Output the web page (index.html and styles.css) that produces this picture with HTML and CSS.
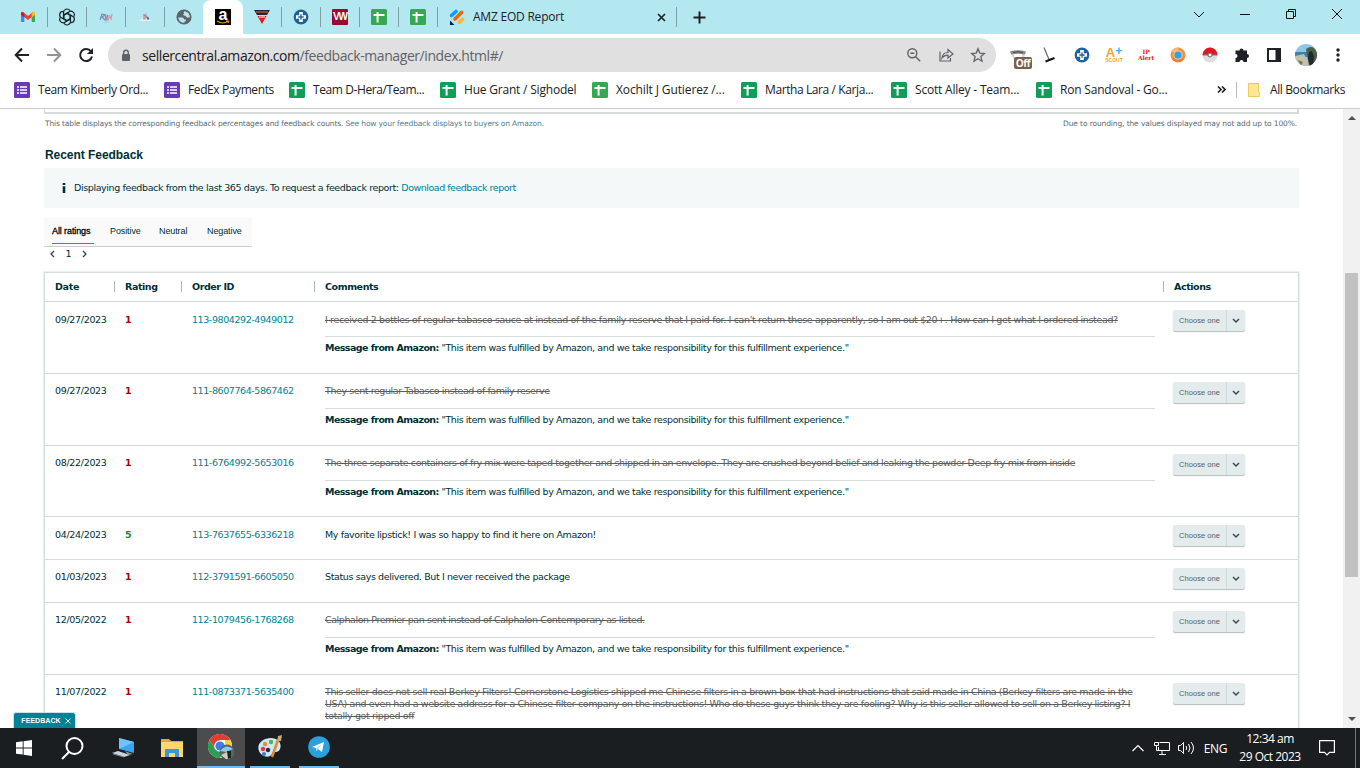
FILE: index.html
```html
<!DOCTYPE html>
<html lang="en">
<head>
  <meta charset="UTF-8">
  <meta name="viewport" content="width=device-width, initial-scale=1.0">
  <title>Feedback Manager</title>
  <link rel="stylesheet" href="styles.css">
</head>
<body>
  <!-- shared icons -->
  <svg class="defs">
    <symbol id="sheet" viewBox="0 0 16 16"><rect width="16" height="16" rx="1.5" fill="currentColor"/><path d="M2.5 5.9h11M6.6 3v10.5" stroke="#fff" stroke-width="2"/></symbol>
    <symbol id="form" viewBox="0 0 16 16"><rect width="16" height="16" rx="1.5" fill="#673ab7"/><path d="M6 5h7M6 8h7M6 11h7M3 5h2M3 8h2M3 11h2" stroke="#fff" stroke-width="1.7"/></symbol>
    <symbol id="cross" viewBox="0 0 16 16"><circle cx="8" cy="8" r="7.4" fill="#1f6396"/><path d="M6.2 3h3.600v3.200H13v3.600H9.800V13H6.200V9.800H3V6.200h3.200z" fill="#fff"/><path d="M8 5.300v5.400M5.300 8h5.400" stroke="#1f6396" stroke-width="1.300"/></symbol>
    <symbol id="down" viewBox="0 0 8 6"><path d="M1 1l3 3 3-3" fill="none" stroke="#3b4b50" stroke-width="1.5"/></symbol>
  </svg>

  <div class="tabstrip">
    <div class="tab"><svg width="16" height="16" viewBox="0 0 16 16"><path d="M1 4v9h3.300V7z" fill="#4285f4"/><path d="M15 4v9h-3.300V7z" fill="#34a853"/><path d="M1 3.500L3 3l5 4 5-4v4l-5 4-5-4z" fill="#ea4335"/><path d="M11.700 4L14 2.800l1 1V6l-3.300 2.500z" fill="#fbbc04"/><path d="M4.300 4L2 2.800l-1 1V6l3.300 2.500z" fill="#c5221f"/></svg></div>
    <div class="tab"><svg width="18" height="18" viewBox="0 0 18 18" fill="none" stroke="#152427" stroke-width="1.200"><path id="petal" d="M5.500 11V5a3.500 3.500 0 0 1 6.500-2.200M5.500 7.500L10.500 4.600"/><use href="#petal" transform="rotate(60 9 9)"/><use href="#petal" transform="rotate(120 9 9)"/><use href="#petal" transform="rotate(180 9 9)"/><use href="#petal" transform="rotate(240 9 9)"/><use href="#petal" transform="rotate(300 9 9)"/></svg></div>
    <div class="tab"><svg width="16" height="16" viewBox="0 0 16 16" fill="none"><path d="M2 11l2-6 3 1-3 2 3 3M7 5l1 6 2-5" stroke="#6f8fb4" stroke-width="1.200"/><path d="M8 6l2 5 1.500-4 1.500 3 1-5" stroke="#dc9297" stroke-width="1.200"/><path d="M5 13.500h6" stroke="#b3c6d2" stroke-width=".6"/></svg></div>
    <div class="tab"><svg width="16" height="16" viewBox="0 0 16 16"><path d="M6 6l3-2 3 6-5 1z" fill="#a6b3d2"/><path d="M2 12l4-3h4l5 3z" fill="#f2e9ee"/><path d="M6.500 5.500l5 4" stroke="#b5656f" stroke-width="1"/><path d="M6 9.500h3" stroke="#e0a549" stroke-width="2"/><path d="M10 9.500h2" stroke="#515b9c" stroke-width="2"/></svg></div>
    <div class="tab no-line"><svg width="16" height="16" viewBox="0 0 16 16"><circle cx="8" cy="8" r="7.200" fill="#5f6368"/><path d="M1.500 8.500h5q1.500.5 1.500 2h2v1.500l-1.500.5V14.500Q3 15 1.500 8.500zM8.500 1.500Q7 3.500 8 4.500l-1 1.500 2.500 1 1.500 1.500h3.500Q14.500 3 8.500 1.500z" fill="#b4e8f1"/><circle cx="8" cy="8" r="6.700" fill="none" stroke="#5f6368" stroke-width="1.700"/></svg></div>
    <div class="tab active"><span class="amazon">a<svg width="14" height="5" viewBox="0 0 14 5"><path d="M1 1q6 4 11 0M10 1h2.500L12 3" fill="none" stroke="#f90" stroke-width="1.200"/></svg></span></div>
    <div class="tab"><svg width="16" height="16" viewBox="0 0 16 16"><path d="M0 1h16l-3 5H3z" fill="#24263e"/><path d="M2 3h12" stroke="#d14a2b" stroke-width="1.400"/><path d="M3.500 7h9L8 15z" fill="#ef1620"/><path d="M5 8h6" stroke="#fff"/></svg></div>
    <div class="tab"><svg width="16" height="16"><use href="#cross"/></svg></div>
    <div class="tab"><span class="vw">VW</span></div>
    <div class="tab"><svg class="lime" width="16" height="16"><use href="#sheet"/></svg></div>
    <div class="tab"><svg class="lime" width="16" height="16"><use href="#sheet"/></svg></div>
    <div class="tab wide">
      <svg width="16" height="16" viewBox="0 0 16 16" fill="none" stroke-linecap="round" stroke-width="3.600"><path d="M2.500 6.500L7 2.500" stroke="#0a9dff"/><path d="M6 10l6.500-6.500" stroke="#ff6100"/><path d="M10.500 13.200l3-2.700" stroke="#ffb629"/><path d="M1 11.500V16h4.500z" fill="#0a1551" stroke="none"/></svg>
      <span class="tab-title">AMZ EOD Report</span>
      <svg class="close" width="9" height="9" viewBox="0 0 9 9"><path d="M1 1l7 7M8 1L1 8" stroke="#202124" stroke-width="1.700"/></svg>
    </div>
    <svg class="plus" width="13" height="13" viewBox="0 0 13 13"><path d="M6.500 .5v12M.5 6.500h12" stroke="#202124" stroke-width="2"/></svg>
    <div class="window-buttons">
      <svg width="46" height="28" viewBox="0 0 46 28" fill="none" stroke="#111"><path d="M18 12l5 5 5-5"/></svg>
      <svg width="46" height="28" viewBox="0 0 46 28" fill="none" stroke="#111"><path d="M18 14.500h10"/></svg>
      <svg width="46" height="28" viewBox="0 0 46 28" fill="none" stroke="#111"><path d="M18.500 11.500h7v7h-7zM20.500 11V9.500h7v7H26"/></svg>
      <svg width="46" height="28" viewBox="0 0 46 28" fill="none" stroke="#111"><path d="M18 9l10 10M28 9L18 19"/></svg>
    </div>
  </div>

  <div class="toolbar">
    <div class="nav">
      <svg width="16" height="16" viewBox="0 0 16 16" fill="none" stroke="#202124" stroke-width="2"><path d="M15 8H2M8 1.500L1.700 8 8 14.500"/></svg>
      <svg width="16" height="16" viewBox="0 0 16 16" fill="none" stroke="#919396" stroke-width="2"><path d="M1 8h13M8 1.500L14.300 8 8 14.500"/></svg>
      <svg width="16" height="16" viewBox="0 0 16 16" fill="none" stroke="#202124" stroke-width="2"><path d="M13 4.500A6 6 0 1 0 14 9.500"/><path d="M15 1v6H9z" fill="#202124" stroke="none"/></svg>
    </div>
    <div class="omnibox">
      <svg width="10" height="13" viewBox="0 0 10 13"><rect x="1" y="5" width="8" height="7" rx="1" fill="#5f6368"/><path d="M2.700 5V3.500a2.300 2.300 0 0 1 4.600 0V5" fill="none" stroke="#5f6368" stroke-width="1.400"/></svg>
      <span class="url">sellercentral.amazon.com<span class="path">/feedback-manager/index.html#/</span></span>
      <div class="omni-actions">
        <svg width="16" height="16" viewBox="0 0 16 16" fill="none" stroke="#5f6368" stroke-width="1.400"><circle cx="6.300" cy="6.300" r="4.500"/><path d="M9.700 9.700l4.500 4.500M4.300 6.300h4"/></svg>
        <svg width="16" height="16" viewBox="0 0 16 16" fill="none" stroke="#5f6368" stroke-width="1.200"><path d="M2 4.500v9.500h10.500v-3"/><path d="M4 11c.5-4 3-5.500 6-5.500V2.500L15 7l-5 4V8.200C7 8.200 5.500 9 4 11z"/></svg>
        <svg width="16" height="16" viewBox="0 0 16 16" fill="none" stroke="#5f6368" stroke-width="1.300"><path d="M8 1.800l1.800 4.300 4.700.4-3.600 3.100 1.100 4.600L8 11.700l-4 2.500 1.100-4.600-3.600-3.100 4.700-.4z"/></svg>
      </div>
    </div>
    <div class="extensions">
      <div class="ext"><svg width="16" height="16" viewBox="0 0 16 16"><path d="M1.500 6h2.500v5l-1 1zM12 6h2.500v6H12z" fill="#d5d5d5"/><path d="M0 4.500Q8 2 16 4.500L15 7.500Q8 6 1 7.500z" fill="#8c8c8c"/><path d="M3 5.500Q8 4 13 5.500" stroke="#444" fill="none"/></svg><span class="off">Off</span></div>
      <div class="ext"><svg width="16" height="16" viewBox="0 0 16 16"><path d="M2 .500l5 12" stroke="#666" stroke-width="1.200" fill="none"/><path d="M3.500 14.500l9-3.500" stroke="#111" stroke-width="2"/></svg></div>
      <div class="ext"><svg width="16" height="16"><use href="#cross"/></svg></div>
      <div class="ext scout"><b>A<i>+</i></b><small>SCOUT</small></div>
      <div class="ext alert-ip"><span>IP</span><span>Alert</span></div>
      <div class="ext"><svg width="16" height="16" viewBox="0 0 16 16"><circle cx="8" cy="8" r="7.500" fill="#f2913f"/><path d="M1 5a7.500 7.500 0 0 1 8-4.400L7 5z" fill="#f7b779"/><path d="M2 12a7.500 7.500 0 0 0 12 0L8 10z" fill="#e8803e"/><circle cx="8" cy="8" r="4.700" fill="#f8c796"/><circle cx="8" cy="8" r="3.600" fill="#2fa2e8"/></svg></div>
      <div class="ext"><svg width="16" height="16" viewBox="0 0 16 16"><circle cx="8" cy="8" r="7.500" fill="#ddd"/><path d="M.5 8a7.500 7.500 0 0 1 15 0z" fill="#e3171f"/><path d="M.5 8h15" stroke="#777"/><circle cx="8" cy="8" r="2" fill="#fff" stroke="#666"/></svg></div>
      <div class="ext"><svg width="16" height="16" viewBox="0 0 16 16" fill="#202124"><path d="M1.500 3.500h4a2 2 0 1 1 4 0H13V7a2 2 0 1 1 0 4v4H9.500a2 2 0 0 0-4 0h-4v-4a2 2 0 0 0 0-4z"/></svg></div>
      <div class="ext"><svg width="14" height="14" viewBox="0 0 14 14"><path d="M1 1h12v12H1z" fill="none" stroke="#202124" stroke-width="2"/><path d="M8.500 1H13v12H8.500z" fill="#202124"/></svg></div>
      <div class="ext"><svg class="avatar" width="22" height="22" viewBox="0 0 22 22"><rect width="22" height="22" fill="#8ec5e8"/><path d="M0 8h22v5H0z" fill="#3b83a5"/><path d="M0 12l9-2 6 12H0z" fill="#c6bfae"/><path d="M11 5q7-5 11 3v14h-8z" fill="#49604a"/><path d="M14 8l3-1 2 6-1 9h-3l-2-8z" fill="#232a28"/><path d="M3 16l5 2-2 4z" fill="#6f7758"/></svg></div>
      <div class="ext"><svg width="4" height="14" viewBox="0 0 4 14" fill="#202124"><circle cx="2" cy="2" r="1.700"/><circle cx="2" cy="7" r="1.700"/><circle cx="2" cy="12" r="1.700"/></svg></div>
    </div>
  </div>

  <div class="bookmarks">
    <div class="bm w150 tight"><svg width="16" height="16"><use href="#form"/></svg><span>Team Kimberly Ord...</span></div>
    <div class="bm w125 tight"><svg width="16" height="16"><use href="#form"/></svg><span>FedEx Payments</span></div>
    <div class="bm w151 tight"><svg width="16" height="16"><use href="#sheet"/></svg><span>Team D-Hera/Team...</span></div>
    <div class="bm w152"><svg width="16" height="16"><use href="#sheet"/></svg><span>Hue Grant / Sighodel</span></div>
    <div class="bm w149 loose"><svg class="lime" width="16" height="16"><use href="#sheet"/></svg><span>Xochilt J Gutierez /...</span></div>
    <div class="bm w150 tight"><svg width="16" height="16"><use href="#sheet"/></svg><span>Martha Lara / Karja...</span></div>
    <div class="bm w145"><svg width="16" height="16"><use href="#sheet"/></svg><span>Scott Alley - Team...</span></div>
    <div class="bm"><svg width="16" height="16"><use href="#sheet"/></svg><span>Ron Sandoval - Go...</span></div>
    <div class="bm-right">
      <svg width="9" height="7" viewBox="0 0 9 7" fill="none" stroke="#202124" stroke-width="1.600"><path d="M1 .5l3 3-3 3M5 .5l3 3-3 3"/></svg>
      <span class="bm-line"></span>
      <svg width="12" height="14" viewBox="0 0 12 14"><path d="M.5.5h10v9h1v4H.5z" fill="#ffe694" stroke="#eccb5c"/></svg>
      <span class="all">All Bookmarks</span>
    </div>
  </div>

  <div class="viewport">
    <div class="page">
      <div class="card-end"></div>
      <div class="captions">
        <span class="cap-left">This table displays the corresponding feedback percentages and feedback counts. <a>See how your feedback displays to buyers on Amazon.</a></span>
        <span class="cap-right">Due to rounding, the values displayed may not add up to 100%.</span>
      </div>
      <h2>Recent Feedback</h2>
      <div class="notice">
        <svg width="4" height="10" viewBox="0 0 4 10" fill="#002f36"><path d="M.7 0h2.600v2H.7zM.7 3.300h2.600V10H.7z"/></svg>
        <span>Displaying feedback from the last 365 days. To request a feedback report: <a>Download feedback report</a></span>
      </div>
      <div class="filters">
        <span class="selected">All ratings</span>
        <span class="positive">Positive</span>
        <span class="neutral">Neutral</span>
        <span>Negative</span>
      </div>
      <div class="pager">
        <svg width="5" height="8" viewBox="0 0 5 8"><path d="M4 1L1 4l3 3" fill="none" stroke="#33454a" stroke-width="1.300"/></svg>
        <span>1</span>
        <svg width="5" height="8" viewBox="0 0 5 8"><path d="M1 1l3 3-3 3" fill="none" stroke="#33454a" stroke-width="1.300"/></svg>
      </div>

      <div class="table">
        <div class="row head">
          <div>Date</div><div>Rating</div><div>Order ID</div><div>Comments</div><div>Actions</div>
        </div>
        <div class="row">
          <div>09/27/2023</div><div class="bad">1</div><div class="order">113-9804292-4949012</div>
          <div><p class="struck wider">I received 2 bottles of regular tabasco sauce at instead of the family reserve that I paid for. I can't return these apparently, so I am out $20+. How can I get what I ordered instead?</p><p class="message"><b>Message from Amazon:</b> "This item was fulfilled by Amazon, and we take responsibility for this fulfillment experience."</p></div>
          <div><button class="choose"><span>Choose one</span><svg width="8" height="6"><use href="#down"/></svg></button></div>
        </div>
        <div class="row up">
          <div>09/27/2023</div><div class="bad">1</div><div class="order">111-8607764-5867462</div>
          <div><p class="struck">They sent regular Tabasco instead of family reserve</p><p class="message"><b>Message from Amazon:</b> "This item was fulfilled by Amazon, and we take responsibility for this fulfillment experience."</p></div>
          <div><button class="choose"><span>Choose one</span><svg width="8" height="6"><use href="#down"/></svg></button></div>
        </div>
        <div class="row r71 up">
          <div>08/22/2023</div><div class="bad">1</div><div class="order">111-6764992-5653016</div>
          <div><p class="struck">The three separate containers of fry mix were taped together and shipped in an envelope. They are crushed beyond belief and leaking the powder Deep fry mix from inside</p><p class="message"><b>Message from Amazon:</b> "This item was fulfilled by Amazon, and we take responsibility for this fulfillment experience."</p></div>
          <div><button class="choose"><span>Choose one</span><svg width="8" height="6"><use href="#down"/></svg></button></div>
        </div>
        <div class="row short">
          <div>04/24/2023</div><div class="good">5</div><div class="order">113-7637655-6336218</div>
          <div><p class="plain">My favorite lipstick! I was so happy to find it here on Amazon!</p></div>
          <div><button class="choose"><span>Choose one</span><svg width="8" height="6"><use href="#down"/></svg></button></div>
        </div>
        <div class="row short up">
          <div>01/03/2023</div><div class="bad">1</div><div class="order">112-3791591-6605050</div>
          <div><p class="plain">Status says delivered. But I never received the package</p></div>
          <div><button class="choose"><span>Choose one</span><svg width="8" height="6"><use href="#down"/></svg></button></div>
        </div>
        <div class="row up">
          <div>12/05/2022</div><div class="bad">1</div><div class="order">112-1079456-1768268</div>
          <div><p class="struck">Calphalon Premier pan sent instead of Calphalon Contemporary as listed.</p><p class="message"><b>Message from Amazon:</b> "This item was fulfilled by Amazon, and we take responsibility for this fulfillment experience."</p></div>
          <div><button class="choose"><span>Choose one</span><svg width="8" height="6"><use href="#down"/></svg></button></div>
        </div>
        <div class="row last up">
          <div>11/07/2022</div><div class="bad">1</div><div class="order">111-0873371-5635400</div>
          <div><p class="struck plain">This seller does not sell real Berkey Filters! Cornerstone Logistics shipped me Chinese filters in a brown box that had instructions that said made in China (Berkey filters are made in the<br>USA) and even had a website address for a Chinese filter company on the instructions! Who do these guys think they are fooling? Why is this seller allowed to sell on a Berkey listing? I<br>totally got ripped off</p></div>
          <div><button class="choose"><span>Choose one</span><svg width="8" height="6"><use href="#down"/></svg></button></div>
        </div>
      </div>
    </div>
    <div class="scrollbar">
      <svg width="8" height="4" viewBox="0 0 8 4"><path d="M0 4l4-4 4 4z" fill="#505050"/></svg>
      <div class="thumb"></div>
      <svg width="8" height="4" viewBox="0 0 8 4"><path d="M0 0l4 4 4-4z" fill="#505050"/></svg>
    </div>
    <div class="feedback-tab">FEEDBACK <svg width="6" height="6" viewBox="0 0 6 6"><path d="M.5.5l5 5M5.500.5l-5 5" stroke="#fff"/></svg></div>
  </div>

  <div class="taskbar">
    <div class="task"><svg width="16" height="16" viewBox="0 0 16 16" fill="#fff"><path d="M0 2.200l6.700-.9v6.200H0zM7.600 1.200L16 0v7.500H7.600zM0 8.400h6.700v6.200L0 13.700zM7.600 8.400H16V16l-8.400-1.200z"/></svg></div>
    <div class="task"><svg width="23" height="23" viewBox="0 0 23 23" fill="none" stroke="#fff" stroke-width="2"><circle cx="13.500" cy="9" r="8"/><path d="M8 15L1 22"/></svg></div>
    <div class="task t3"><svg width="24" height="22" viewBox="0 0 24 22"><path d="M8 1l15 4v11L8 12z" fill="#3aa5ee"/><path d="M8 1l15 4-15 7z" fill="#70c4fb"/><path d="M1 16l6-2 12 4-6 2z" fill="#c9d5dd"/><path d="M2 17l11 3" stroke="#7a858c"/><path d="M14 14l5 2 3 1-5 1z" fill="#8a979f"/></svg></div>
    <div class="task t4"><svg width="22" height="20" viewBox="0 0 22 20"><path d="M0 1h8l2 2h12v16H0z" fill="#e8a33d"/><path d="M0 4h22v15H0z" fill="#ffd76e"/><path d="M4 19v-8h14v8h-4v-4H8v4z" fill="#3f95dc"/></svg></div>
    <div class="task open current"><svg width="26" height="26" viewBox="0 0 26 26"><circle cx="12" cy="12" r="12" fill="#fff"/><path d="M1.600 6A12 12 0 0 1 22.400 6H12L7 15z" fill="#e33b2e"/><path d="M22.400 6A12 12 0 0 1 12 24l5-9V6z" fill="#ffcd40"/><path d="M1.600 6A12 12 0 0 0 12 24l5-9-10 0z" fill="#2a9f4d"/><circle cx="12" cy="12" r="5.800" fill="#fff"/><circle cx="12" cy="12" r="4.600" fill="#3b7ded"/><circle cx="19" cy="18" r="7.500" fill="#56656a"/><path d="M12 17q6-8 13-2l-7 3z" fill="#8cc9ec"/><path d="M13 21l6-3 3 7h-4z" fill="#d5cfb5"/><path d="M19 17l4 0 0 7-3 1z" fill="#1c2523"/></svg></div>
    <div class="task open paint"><svg width="26" height="24" viewBox="0 0 26 24"><path d="M2 16C-1 9 6 3 14 3s11 6 9 11-6 1-8 5-10 4-13-3z" fill="#cfe6f5"/><circle cx="6" cy="14" r="2.200" fill="#d9403a"/><circle cx="8" cy="9" r="2.200" fill="#f18a31"/><circle cx="14" cy="7" r="2.200" fill="#4eb54e"/><circle cx="11" cy="15" r="2.200" fill="#21313c"/><circle cx="7" cy="19" r="2" fill="#3d78d1"/><path d="M15 22l6-17" stroke="#e08a34" stroke-width="2.600"/><path d="M20 6l1-5 4-1-1 6z" fill="#caa678"/></svg></div>
    <div class="task open telegram"><svg width="22" height="22" viewBox="0 0 22 22"><circle cx="11" cy="11" r="10.800" fill="#2aa1dd"/><path d="M4 11l12-5-2 10-4-3-2 2v-3z" fill="#fff"/><path d="M8 12l6-4-4 5-2 2z" fill="#b8dcef"/></svg></div>
    <div class="tray">
      <svg class="tray-up" width="12" height="8" viewBox="0 0 12 8"><path d="M.5 7L6 1.500 11.500 7" fill="none" stroke="#fff" stroke-width="1.200"/></svg>
      <svg class="net" width="16" height="14" viewBox="0 0 16 14" fill="none" stroke="#fff"><path d="M5.500 1.500h10v8h-11V6M8 10v3M5 13.500h7M.5 1.500h4v3h-4zM2.500 4.500v5h2"/></svg>
      <svg class="snd" width="17" height="14" viewBox="0 0 17 14" fill="none" stroke="#fff"><path d="M.5 4.500h2l3-3v11l-3-3h-2zM8 5q1.500 2 0 4M10.500 3q3 4 0 8M13 1q5 6 0 12"/></svg>
      <span class="lang">ENG</span>
      <div class="clock"><span>12:34 am</span><span>29 Oct 2023</span></div>
      <svg class="note" width="16" height="16" viewBox="0 0 16 16" fill="none" stroke="#fff" stroke-width="1.200"><path d="M.6.600h14.800v11.800H10.500l-2.500 2.500-2.500-2.500H.6z"/></svg>
      <span class="peek"></span>
    </div>
  </div>
</body>
</html>
```
FILE: styles.css
```css
* {
  box-sizing: border-box;
}
body {
  margin: 0;
  width: 1360px;
  height: 768px;
  overflow: hidden;
  display: flex;
  flex-direction: column;
  background: #fff;
  color: #202124;
  font-family: "Open Sans", "Noto Sans", sans-serif;
  font-size: 12px;
}
svg {
  display: block;
  flex: none;
}
p, h2 {
  margin: 0;
}
.defs {
  position: absolute;
  width: 0;
  height: 0;
}

/* browser tabs */
.tabstrip {
  height: 34px;
  padding-left: 9px;
  background: #b4e8f1;
  display: flex;
  align-items: center;
}
.tab {
  position: relative;
  width: 39px;
  height: 34px;
  padding-right: 1px;
  flex: none;
  display: flex;
  align-items: center;
  justify-content: center;
}
.tab::after {
  content: "";
  position: absolute;
  right: 0;
  top: 7px;
  width: 1px;
  height: 20px;
  background: #7f9fa5;
}
.no-line::after, .active::after {
  display: none;
}
.active {
  width: 40px;
  margin-left: -1px;
  padding: 0;
  background: #fff;
  border-radius: 8px 8px 0 0;
}
.amazon {
  width: 16px;
  height: 16px;
  background: #000;
  color: #fff;
  font: bold 16px/11px "Liberation Sans", sans-serif;
  display: flex;
  flex-direction: column;
  align-items: center;
}
.vw {
  width: 16px;
  height: 16px;
  background: #9b0a2c;
  color: #fff;
  font: bold 10px/16px "Liberation Sans", sans-serif;
  letter-spacing: -1px;
  text-align: center;
  border-radius: 1px;
}
.wide {
  width: 239px;
  padding: 0 11px;
  justify-content: flex-start;
}
.tab-title {
  margin-left: 8px;
  padding-bottom: 1px;
  letter-spacing: -0.22px;
}
.close {
  margin-left: auto;
}
.plus {
  margin-left: 16px;
}
.window-buttons {
  margin-left: auto;
  height: 28px;
  align-self: flex-start;
  display: flex;
}

/* address bar */
.toolbar {
  height: 42px;
  display: flex;
  align-items: center;
}
.nav {
  width: 108px;
  padding-left: 14px;
  display: flex;
  gap: 16px;
}
.omnibox {
  width: 888px;
  height: 34px;
  padding: 0 10px 0 13px;
  border-radius: 17px;
  background: #e0e0e0;
  display: flex;
  align-items: center;
}
.url {
  margin-left: 11px;
  font-size: 14px;
  letter-spacing: -0.43px;
}
.path {
  color: #5f6368;
}
.omni-actions {
  margin-left: auto;
  display: flex;
  gap: 16px;
}
.extensions {
  margin-left: 6px;
  display: flex;
}
.ext {
  position: relative;
  width: 32px;
  height: 32px;
  display: flex;
  align-items: center;
  justify-content: center;
}
.off {
  position: absolute;
  left: 12px;
  top: 18px;
  width: 18px;
  height: 12px;
  border-radius: 2px;
  background: #7a6148;
  color: #fff;
  font: bold 10px/12px "Open Sans", sans-serif;
  letter-spacing: -0.4px;
  text-align: center;
}
.scout, .alert-ip {
  flex-direction: column;
}
.scout b {
  height: 11px;
  color: #f3a51f;
  font: bold 13px/9px "Liberation Sans", sans-serif;
}
.scout i {
  color: #31b4e6;
  font-style: normal;
  font-size: 12px;
  line-height: 8px;
  vertical-align: 2px;
}
.scout small {
  color: #f3a51f;
  font: bold 5px/5px "Liberation Sans", sans-serif;
}
.alert-ip {
  padding-bottom: 1px;
  color: #e8141c;
  font: bold 6px/6px "DejaVu Serif", serif;
  letter-spacing: -0.1px;
}
.avatar {
  border-radius: 50%;
}

/* bookmarks */
.bookmarks {
  height: 33px;
  padding: 0 15px 5px 14px;
  border-bottom: 1px solid #ccc;
  display: flex;
  align-items: center;
}
.bm {
  display: flex;
  align-items: center;
  gap: 8px;
  color: #0f9d58;
  letter-spacing: -0.2px;
  white-space: nowrap;
}
.bm.tight {
  letter-spacing: -0.4px;
}
.bm.loose {
  letter-spacing: -0.12px;
}
.bm span {
  color: #202124;
}
.lime, .loose svg {
  color: #34a853;
}
.w125 { width: 125px; }
.w145 { width: 145px; }
.w149 { width: 149px; }
.w150 { width: 150px; }
.w151 { width: 151px; }
.w152 { width: 152px; }
.bm-right {
  margin-left: auto;
  display: flex;
  align-items: center;
}
.bm-line {
  width: 1px;
  height: 16px;
  margin: 0 11px 0 10px;
  background: #bbb;
}
.all {
  margin-left: 10px;
  letter-spacing: -0.38px;
}

/* page */
.viewport {
  position: relative;
  height: 619px;
  display: flex;
  overflow: hidden;
  color: #002f36;
  font-family: "DejaVu Sans", sans-serif;
  font-size: 9.5px;
  line-height: 12px;
  letter-spacing: -0.42px;
}
.page {
  width: 1343px;
  padding: 0 44px;
  overflow: hidden;
}
.viewport a {
  color: #008296;
}
.card-end {
  height: 5px;
  border: 1px solid #d5dbdb;
  border-width: 0 2px 2px 1px;
}
.captions {
  height: 20px;
  padding: 0 2px 0 1px;
  display: flex;
  justify-content: space-between;
  align-items: center;
  font-size: 7.5px;
  letter-spacing: -0.14px;
  color: #5a6a70;
}
.cap-right {
  letter-spacing: -0.115px;
}
.captions a {
  color: #507f91;
}
h2 {
  height: 34px;
  padding: 13px 1px 0;
  font: bold 12px/16px "Liberation Sans", sans-serif;
  letter-spacing: -0.05px;
}
.notice {
  width: 1255px;
  height: 40px;
  padding-left: 18px;
  background: #f4f8f8;
  display: flex;
  align-items: center;
  gap: 8px;
  letter-spacing: -0.385px;
}
.notice a {
  letter-spacing: -0.48px;
}
.filters {
  width: 208px;
  height: 30px;
  margin-top: 9px;
  padding: 0 8px;
  background: #fafafa;
  border-bottom: 1px solid #ccc;
  display: flex;
  font: 9px/28px "Liberation Sans", sans-serif;
  letter-spacing: -0.1px;
}
.filters .selected {
  width: 42px;
  height: 27px;
  margin-right: 16px;
  color: #000;
  border-bottom: 1px solid #00a1b7;
  -webkit-text-stroke: 0.3px #000;
}
.positive {
  width: 49px;
}
.neutral {
  width: 48px;
}
.pager {
  height: 25px;
  padding: 0 6px 11px;
  display: flex;
  align-items: center;
  gap: 10.5px;
}
.table {
  width: 1255px;
  border: 1px solid #d5dbdb;
  border-bottom: 0;
  box-shadow: 0 0 1px 1px #eef1f1;
}
.row {
  height: 72px;
  padding: 12px 0 0 10px;
  border-bottom: 1px solid #d5dbdb;
  display: grid;
  grid-template-columns: 70px 67px 133px 849px 1fr;
}
.row.r71 { height: 71px; }
.row.short { height: 43px; }
.row.last { height: 90px; }
.row.up > div:not(:last-child) {
  margin-top: -1px;
}
.row.head {
  height: 29px;
  padding-top: 8px;
  font-weight: bold;
}
.head div {
  position: relative;
}
.head div + div::before {
  content: "";
  position: absolute;
  left: -11px;
  width: 1px;
  height: 11px;
  background: #aab7b8;
}
.row > div:first-child {
  letter-spacing: -0.32px;
}
.bad, .good {
  color: #a00;
  font-weight: bold;
}
.good {
  color: #178a31;
}
.order {
  color: #008296;
}
.row p {
  white-space: nowrap;
}
.plain {
  letter-spacing: -0.38px;
}
.struck {
  color: #5d5d5d;
  text-decoration: line-through;
}
.wider {
  letter-spacing: -0.35px;
}
.message {
  width: 830px;
  margin-top: 10px;
  padding-top: 5px;
  border-top: 1px solid #d5dbdb;
  letter-spacing: -0.395px;
}
.message b {
  letter-spacing: -0.56px;
}
.up .message {
  margin-top: 11px;
}
.choose {
  width: 72px;
  height: 21px;
  margin: -4px 0 0 -1px;
  padding: 0;
  border: 0;
  border-radius: 2px;
  background: #e3ebec;
  box-shadow: 0 1px 1px #b5bcbd;
  color: #555f66;
  font: 7.5px/21px "Liberation Sans", sans-serif;
  letter-spacing: 0.05px;
  display: flex;
  align-items: center;
}
.choose span {
  width: 54px;
  margin-right: 5px;
  border-right: 1px solid #d0dadb;
}
.scrollbar {
  width: 17px;
  padding: 7px 0;
  background: #f1f1f1;
  display: flex;
  flex-direction: column;
  align-items: center;
}
.thumb {
  width: 13px;
  height: 304px;
  margin: 153px 0 auto;
  background: #c1c1c1;
}
.feedback-tab {
  position: absolute;
  left: 13px;
  bottom: 0;
  width: 63px;
  height: 16px;
  padding-left: 3px;
  border: 1px solid #cfe0e3;
  border-bottom: 0;
  border-radius: 3px 3px 0 0;
  background: #008296;
  color: #fff;
  display: flex;
  align-items: center;
  justify-content: center;
  gap: 4px;
  font: bold 7px/14px "Liberation Sans", sans-serif;
  letter-spacing: 0.05px;
}

/* taskbar */
.taskbar {
  height: 40px;
  background: #1b1e20;
  color: #fff;
  display: flex;
}
.task {
  width: 48px;
  height: 40px;
  display: flex;
  align-items: center;
  justify-content: center;
}
.t3 {
  width: 53px;
}
.t4 {
  padding-right: 2px;
}
.open {
  border-bottom: 2px solid #76b9ed;
}
.current {
  background: #4a4c4e;
}
.paint {
  width: 40px;
  margin-left: 5px;
}
.telegram {
  width: 40px;
  margin-left: 9px;
}
.tray {
  margin-left: auto;
  display: flex;
  align-items: center;
}
.net {
  margin-left: 10px;
}
.snd {
  margin-left: 8px;
}
.lang {
  margin-left: 9px;
  letter-spacing: -0.4px;
}
.clock {
  width: 62px;
  margin-left: 12px;
  display: flex;
  flex-direction: column;
  align-items: center;
  line-height: 18px;
  letter-spacing: -0.5px;
  white-space: nowrap;
}
.note {
  margin-left: 18px;
}
.peek {
  width: 1px;
  height: 40px;
  margin: 0 4px 0 20px;
  background: #777;
}
```
